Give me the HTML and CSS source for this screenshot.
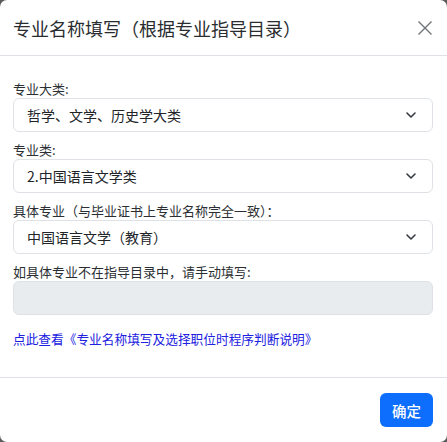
FILE: index.html
```html
<!DOCTYPE html>
<html lang="zh-CN">
<head>
<meta charset="utf-8">
<title>专业名称填写</title>
<link rel="stylesheet" href="styles.css">
</head>
<body>
<div class="modal">
  <div class="modal-header">
    <h5 class="modal-title">专业名称填写（根据专业指导目录）</h5>
    <button class="btn-close" type="button" aria-label="关闭">
      <svg width="16" height="16" viewBox="0 0 16 16"><path d="M1.5 1.5L14.5 14.5M14.5 1.5L1.5 14.5" stroke="#6f7377" stroke-width="1.4" fill="none"/></svg>
    </button>
  </div>
  <div class="modal-body">
    <div class="group">
      <label class="label">专业大类:</label>
      <div class="select"><span>哲学、文学、历史学大类</span><svg class="chev" width="12" height="8" viewBox="0 0 12 8"><path d="M2 2l4 4 4-4" stroke="#343a40" stroke-width="1.6" fill="none" stroke-linecap="round" stroke-linejoin="round"/></svg></div>
    </div>
    <div class="group">
      <label class="label">专业类:</label>
      <div class="select"><span>2.中国语言文学类</span><svg class="chev" width="12" height="8" viewBox="0 0 12 8"><path d="M2 2l4 4 4-4" stroke="#343a40" stroke-width="1.6" fill="none" stroke-linecap="round" stroke-linejoin="round"/></svg></div>
    </div>
    <div class="group">
      <label class="label">具体专业（与毕业证书上专业名称完全一致）：</label>
      <div class="select"><span>中国语言文学（教育）</span><svg class="chev" width="12" height="8" viewBox="0 0 12 8"><path d="M2 2l4 4 4-4" stroke="#343a40" stroke-width="1.6" fill="none" stroke-linecap="round" stroke-linejoin="round"/></svg></div>
    </div>
    <div class="group">
      <label class="label">如具体专业不在指导目录中，请手动填写:</label>
      <div class="input"></div>
    </div>
    <a class="link" href="#">点此查看《专业名称填写及选择职位时程序判断说明》</a>
  </div>
  <div class="modal-footer">
    <button class="btn-primary" type="button">确定</button>
  </div>
</div>
</body>
</html>
```
FILE: styles.css
```css
* { box-sizing: border-box; }
html, body { margin: 0; padding: 0; }
body {
  width: 447px;
  height: 442px;
  background: #5b5b5b;
  font-family: "Noto Sans CJK SC", "Noto Sans", sans-serif;
  color: #212529;
  overflow: hidden;
}
.modal {
  width: 447px;
  height: 442px;
  background: #fff;
  border-radius: 7px;
  display: flex;
  flex-direction: column;
}
.modal-header {
  height: 56px;
  border-bottom: 1px solid #dee2e6;
  display: flex;
  align-items: center;
  justify-content: space-between;
  padding: 0 14px 0 13px;
}
.modal-title {
  margin: 0;
  font-size: 18px;
  font-weight: 400;
  color: #2a2d30;
  line-height: 24px;
}
.btn-close {
  border: 0;
  background: none;
  padding: 0;
  width: 16px;
  height: 16px;
  display: flex;
}
.modal-body {
  flex: 1;
  padding: 24px 14px 0 13px;
  display: flex;
  flex-direction: column;
}
.group {
  display: flex;
  flex-direction: column;
  margin-bottom: 9px;
}
.label {
  font-size: 13px;
  line-height: 18px;
  color: #2b2f33;
}
.select, .input {
  height: 34px;
  border: 1px solid #dee2e6;
  border-radius: 6px;
}
.select {
  display: flex;
  align-items: center;
  justify-content: space-between;
  padding: 0 15px 0 13px;
  font-size: 14px;
  color: #212529;
}
.input {
  background: #e9ecef;
}
.link {
  margin-top: 6px;
  font-size: 12.7px;
  line-height: 18px;
  color: #2020e0;
  text-decoration: none;
}
.modal-footer {
  height: 65px;
  border-top: 1px solid #dee2e6;
  display: flex;
  align-items: center;
  justify-content: flex-end;
  padding: 0 14px;
}
.btn-primary {
  background: #0d6efd;
  color: #fff;
  border: 0;
  border-radius: 6px;
  height: 34px;
  width: 53px;
  font-family: "Noto Sans CJK SC", sans-serif;
  font-size: 14.5px;
  font-weight: 500;
  padding: 0;
}
```
